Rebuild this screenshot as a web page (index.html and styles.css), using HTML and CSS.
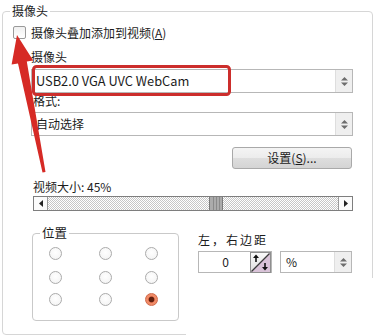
FILE: index.html
```html
<!DOCTYPE html>
<html>
<head>
<meta charset="utf-8">
<link rel="stylesheet" href="styles.css">
</head>
<body>
<div class="group">
  <span class="legend">摄像头</span>
  <div class="check-row"><span class="checkbox"></span><span>摄像头叠加添加到视频(<u>A</u>)</span></div>
  <div class="label l-cam">摄像头</div>
  <div class="combo c1"><span class="combo-text">USB2.0 VGA UVC WebCam</span><span class="spin"><svg width="7" height="9" viewBox="0 0 7 9"><path d="M3.5 0 L7 3.5 L0 3.5Z M0 5.5 L7 5.5 L3.5 9Z" fill="#6e6e6e"/></svg></span></div>
  <div class="label l-fmt">格式:</div>
  <div class="combo c2"><span class="combo-text">自动选择</span><span class="spin"><svg width="7" height="9" viewBox="0 0 7 9"><path d="M3.5 0 L7 3.5 L0 3.5Z M0 5.5 L7 5.5 L3.5 9Z" fill="#6e6e6e"/></svg></span></div>
  <div class="btn-row"><div class="btn">设置(<u>S</u>)...</div></div>
  <div class="label l-size">视频大小: 45%</div>
  <div class="scrollbar">
    <div class="sb-btn sb-l"><svg width="4" height="7" viewBox="0 0 4 7"><path d="M4 0 L0 3.5 L4 7Z" fill="#222"/></svg></div>
    <div class="track tl"></div>
    <div class="thumb"></div>
    <div class="track tr"></div>
    <div class="sb-btn sb-r"><svg width="4" height="7" viewBox="0 0 4 7"><path d="M0 0 L4 3.5 L0 7Z" fill="#222"/></svg></div>
  </div>
  <div class="bottom">
    <div class="pos-group">
      <span class="legend pos-legend">位置</span>
      <div class="radios">
        <span class="radio"></span><span class="radio"></span><span class="radio"></span>
        <span class="radio"></span><span class="radio"></span><span class="radio"></span>
        <span class="radio"></span><span class="radio"></span><span class="radio on"></span>
      </div>
    </div>
    <div class="margin-box">
      <div class="label l-margin">左，右边距</div>
      <div class="spin-row">
        <div class="num"><span class="num-text">0</span>
          <svg class="updown" width="21" height="21" viewBox="0 0 21 21">
            <defs><linearGradient id="g" x1="0" y1="0" x2="0" y2="1"><stop offset="0" stop-color="#fafafa"/><stop offset="1" stop-color="#dedede"/></linearGradient></defs>
            <rect x="0.5" y="0.5" width="20" height="20" fill="url(#g)" stroke="#8f8f8f"/>
            <path d="M20 1 L20 20 L1 20Z" fill="#d9c3d8"/>
            <path d="M1.5 19.5 L19.5 1.5" stroke="#3a3a3a" stroke-width="1.3"/>
            <path d="M6 10 L6 4" stroke="#111" stroke-width="1.6"/>
            <path d="M3 6 L6 2.5 L9 6Z" fill="#111"/>
            <path d="M15 11 L15 17" stroke="#111" stroke-width="1.6"/>
            <path d="M12 15 L15 18.5 L18 15Z" fill="#111"/>
          </svg>
        </div>
        <div class="combo c3"><span class="combo-text">%</span><span class="spin"><svg width="7" height="9" viewBox="0 0 7 9"><path d="M3.5 0 L7 3.5 L0 3.5Z M0 5.5 L7 5.5 L3.5 9Z" fill="#6e6e6e"/></svg></span></div>
      </div>
    </div>
  </div>
</div>
<div class="mask"></div>
<svg class="annot" width="374" height="336" viewBox="0 0 374 336">
  <rect x="33.5" y="66.5" width="196" height="28" rx="3" fill="none" stroke="#cc2e2c" stroke-width="3"/>
  <polygon points="17,35 33.2,60.4 26.8,61.6 45.5,172 42.5,172.6 18,63.4 11.6,64.6" fill="#d62a25"/>
</svg>
</body>
</html>
```
FILE: styles.css
```css
html, body {
  margin: 0;
  padding: 0;
  background: #fff;
}
body {
  width: 374px;
  height: 336px;
  overflow: hidden;
  position: relative;
  font-family: "Noto Sans CJK SC", "Noto Sans", sans-serif;
  font-size: 12px;
  color: #1c1c1c;
}
.group {
  position: relative;
  margin: 11px 0 0 2px;
  width: 371px;
  height: 324px;
  box-sizing: border-box;
  border: 1px solid #d6d6d6;
  border-radius: 4px;
  padding-left: 10px;
}
.legend {
  position: absolute;
  top: -8px;
  left: 7px;
  padding: 0 2px;
  background: #fff;
  line-height: 14px;
}
.check-row {
  display: flex;
  align-items: center;
  gap: 5px;
  margin-top: 14px;
  height: 13px;
  line-height: 13px;
}
.checkbox {
  width: 13px;
  height: 13px;
  box-sizing: border-box;
  border: 1px solid #9a9a9a;
  border-radius: 2px;
  background: linear-gradient(#f0f0f0, #ffffff);
}
.label {
  height: 14px;
  line-height: 14px;
  white-space: nowrap;
}
.l-cam { margin: 11px 0 0 18px; }
.l-fmt { margin: 1px 0 0 20px; }
.l-size { margin: 11px 0 0 20px; }
.l-margin { letter-spacing: 2px; }
.combo {
  display: flex;
  box-sizing: border-box;
  border: 1px solid #b7b7b7;
  background: #fff;
}
.c1 { margin: 5px 0 0 18px; width: 322px; height: 24px; }
.c2 { margin: 4px 0 0 18px; width: 322px; height: 24px; }
.combo-text {
  flex: 1;
  padding-left: 4px;
  line-height: 22px;
  white-space: nowrap;
}
.c1 .combo-text { font-size: 12.8px; }
.spin {
  width: 16px;
  display: flex;
  align-items: center;
  justify-content: center;
  background: #efefef;
  border-left: 1px solid #dedede;
}
.btn-row {
  margin: 11px 0 0 219px;
}
.btn {
  width: 120px;
  height: 22px;
  box-sizing: border-box;
  border: 1px solid #a9a9a9;
  border-radius: 3px;
  background: linear-gradient(#f4f4f4, #ececec 50%, #dedede 50%, #d4d4d4);
  text-align: center;
  line-height: 20px;
}
.scrollbar {
  display: flex;
  margin: 2px 0 0 20px;
  width: 320px;
  height: 15px;
  box-sizing: border-box;
  border: 1px solid #7e7e7e;
}
.sb-btn {
  width: 13px;
  display: flex;
  align-items: center;
  justify-content: center;
  background: #fbfbfb;
}
.sb-l { border-right: 1px solid #9a9a9a; }
.sb-r { border-left: 1px solid #9a9a9a; }
.track {
  background: repeating-conic-gradient(#c6c6c6 0 25%, #ffffff 0 50%) 0 0 / 2px 2px;
}
.tl { width: 161px; }
.tr { flex: 1; }
.thumb {
  width: 14px;
  box-sizing: border-box;
  border-left: 1px solid #7a7a7a;
  border-right: 1px solid #7a7a7a;
  background:
    linear-gradient(90deg, transparent 3px, #8a8a8a 3px, #8a8a8a 4px, transparent 4px, transparent 6px, #8a8a8a 6px, #8a8a8a 7px, transparent 7px, transparent 9px, #8a8a8a 9px, #8a8a8a 10px, transparent 10px),
    #ababab;
}
.bottom {
  display: flex;
  margin-top: 22px;
}
.pos-group {
  position: relative;
  margin-left: 19px;
  width: 147px;
  height: 88px;
  box-sizing: border-box;
  border: 1px solid #c9c9c9;
  border-radius: 4px;
}
.pos-legend {
  left: 7px;
  font-size: 12.5px;
}
.radios {
  display: grid;
  grid-template-columns: 50px 46px 13px;
  grid-template-rows: 24px 22px 13px;
  padding: 13px 0 0 16px;
}
.radio {
  width: 13px;
  height: 13px;
  box-sizing: border-box;
  border: 1px solid #ababab;
  border-radius: 50%;
  background: radial-gradient(circle at 50% 40%, #ffffff, #f1f1f1);
}
.radio.on {
  border-color: #d0694a;
  background: radial-gradient(circle, #5e1f0e 0 2.5px, #c95a3c 3px, #f08b67 3.5px);
}
.margin-box {
  margin-left: 19px;
}
.spin-row {
  display: flex;
  margin-top: 4px;
  gap: 8px;
}
.num {
  display: flex;
  align-items: center;
  width: 74px;
  height: 22px;
  box-sizing: border-box;
  border: 1px solid #b7b7b7;
}
.num-text {
  flex: 1;
  text-align: center;
  line-height: 20px;
  padding-left: 2px;
}
.updown {
  display: block;
}
.c3 { width: 72px; height: 22px; }
.c3 .combo-text { line-height: 20px; padding-left: 5px; }
.mask {
  position: absolute;
  left: 186px;
  top: 278px;
  width: 188px;
  height: 58px;
  background: #fff;
}
.annot {
  position: absolute;
  left: 0;
  top: 0;
  pointer-events: none;
}
```
